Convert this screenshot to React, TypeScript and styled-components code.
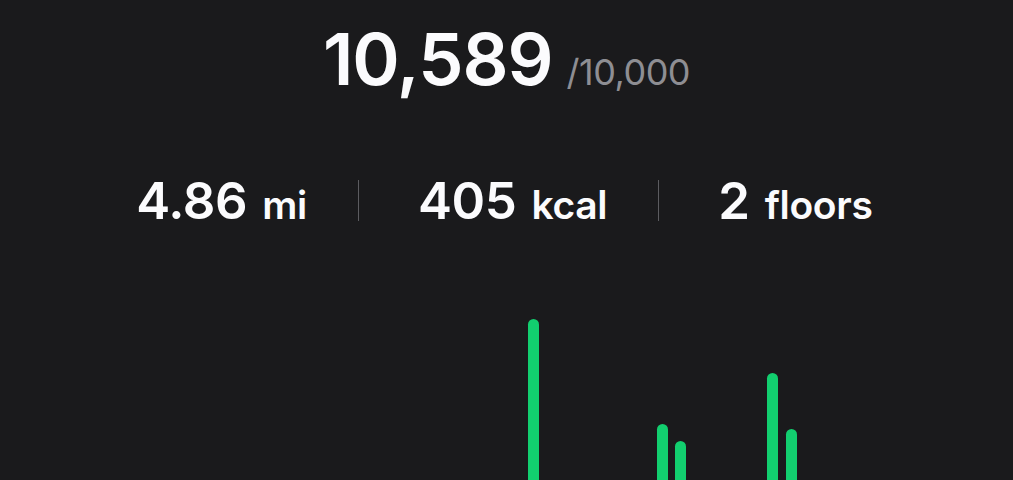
import React from 'react';
import styled, { createGlobalStyle } from 'styled-components';

const GlobalStyle = createGlobalStyle`
  html, body {
    margin: 0;
    padding: 0;
    background: #1a1a1c;
    overflow: hidden;
  }
  body {
    font-family: Inter, "Noto Sans", "Liberation Sans", sans-serif;
    color: #fbfbfd;
  }
`;

const Page = styled.div`
  width: 1013px;
  height: 480px;
  display: flex;
  flex-direction: column;
`;

const Total = styled.div`
  display: flex;
  justify-content: center;
  align-items: baseline;
  gap: 14px;
  padding-top: 23px;
  line-height: 1;
`;

const Steps = styled.span`
  font-size: 72px;
  font-weight: 600;
  letter-spacing: -1px;
`;

const Goal = styled.span`
  font-size: 36px;
  font-weight: 400;
  color: #8e8e93;
  letter-spacing: -0.5px;
`;

const StatsRow = styled.div`
  display: flex;
  justify-content: center;
  align-items: center;
  margin-top: 80px;
  padding-right: 4px;
  line-height: 1;
`;

const Stat = styled.div`
  display: flex;
  align-items: baseline;
  gap: 15px;
`;

const Value = styled.span`
  font-size: 51px;
  font-weight: 600;
  letter-spacing: -0.4px;
`;

const Unit = styled.span`
  font-size: 39px;
  font-weight: 600;
  letter-spacing: -0.3px;
`;

const Divider = styled.div`
  width: 1px;
  height: 41px;
  background: #5c5c60;
  margin: 0 59px 0 51px;
`;

const Chart = styled.div`
  display: grid;
  grid-template-columns: repeat(48, 1fr);
  align-items: end;
  justify-items: center;
  height: 300px;
  margin-top: 93px;
  padding: 0 65px 0 63px;
`;

const Bar = styled.div`
  width: 11px;
  border-radius: 6px;
  background: #12cf6f;
`;

// steps per half hour
const halfHours: number[] = Array.from({ length: 48 }, () => 0);
halfHours[25] = 2410;
halfHours[32] = 1360;
halfHours[33] = 1190;
halfHours[38] = 1870;
halfHours[39] = 1310;

const stats = [
  { value: '4.86', unit: 'mi' },
  { value: '405', unit: 'kcal' },
  { value: '2', unit: 'floors' },
];

export default function App() {
  return (
    <Page>
      <GlobalStyle />
      <Total>
        <Steps>10,589</Steps>
        <Goal>/10,000</Goal>
      </Total>

      <StatsRow>
        {stats.map((s, i) => (
          <React.Fragment key={s.unit}>
            {i > 0 && <Divider />}
            <Stat>
              <Value>{s.value}</Value>
              <Unit>{s.unit}</Unit>
            </Stat>
          </React.Fragment>
        ))}
      </StatsRow>

      <Chart>
        {halfHours.map((n, i) => (
          <Bar key={i} style={{ height: n / 10 }} />
        ))}
      </Chart>
    </Page>
  );
}
